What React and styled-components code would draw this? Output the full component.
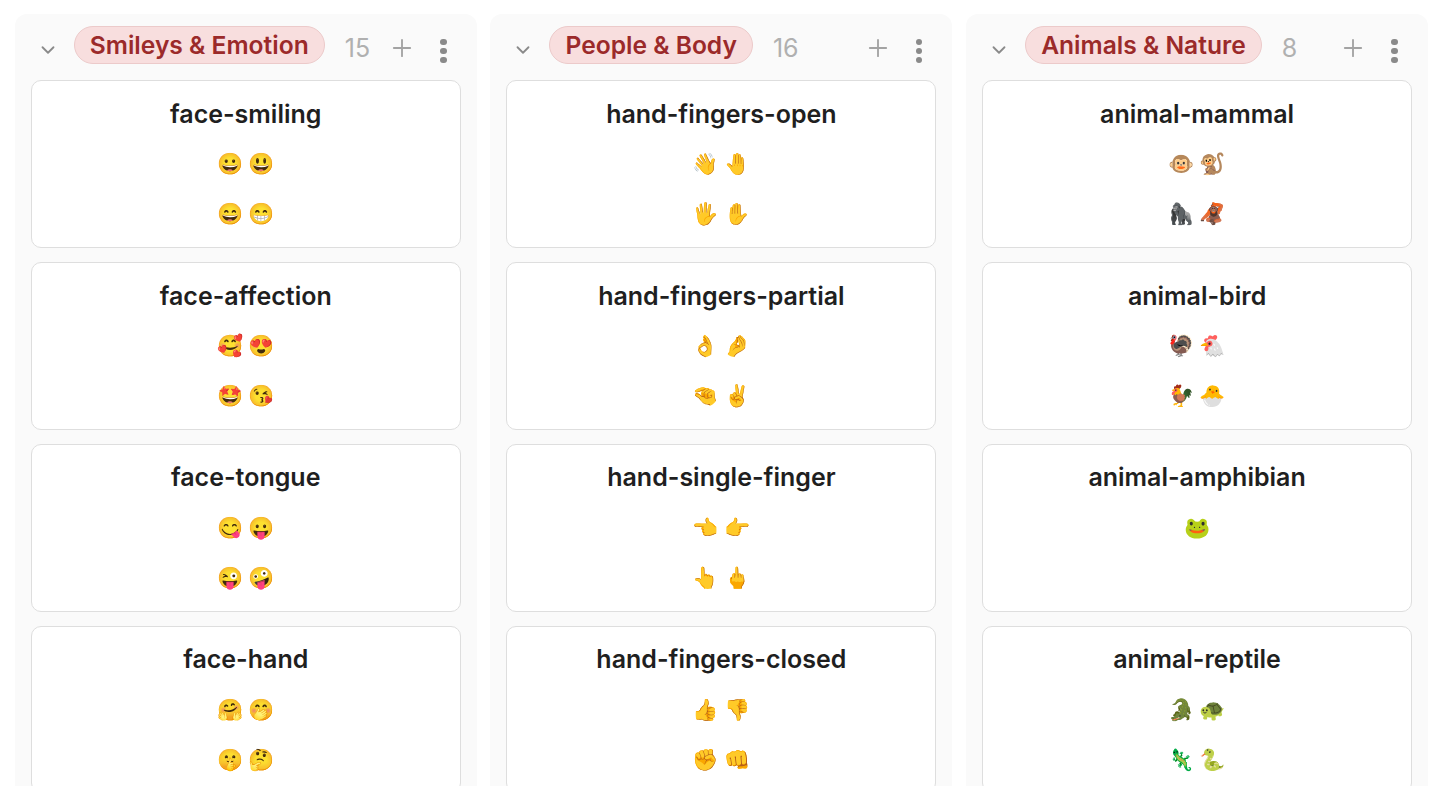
import React from "react";
import styled, { createGlobalStyle } from "styled-components";
import { ChevronDown, Plus } from "lucide-react";

const GlobalStyle = createGlobalStyle`
  html, body {
    margin: 0;
    height: 100%;
    overflow: hidden;
    background: #fff;
    font-family: Inter, "Liberation Sans", sans-serif;
  }
`;

const Board = styled.div`
  display: grid;
  grid-template-columns: repeat(3, 1fr);
  gap: 13.8px;
  height: 786px;
  overflow: hidden;
  box-sizing: border-box;
  padding: 14px 6px 0 14.8px;
`;

const Column = styled.section`
  background: #fafafa;
  border-radius: 12px 12px 0 0;
  padding: 12px 16px 0;
  min-width: 0;
`;

const Header = styled.header`
  display: flex;
  align-items: center;
  height: 38px;
  margin-bottom: 16.3px;
  color: #a3a3a3;
`;

const Toggle = styled.span`
  display: flex;
  width: 26px;
  margin: 9px 13px 0 4px;
  justify-content: center;
  color: #8a8a8a;
`;

const Tag = styled.span`
  background: #f8dede;
  border: 1px solid #eccaca;
  border-radius: 19px;
  color: #9b2a2a;
  font-size: 24.6px;
  font-weight: 600;
  line-height: 36px;
  padding: 0 15px;
  white-space: nowrap;
`;

const Count = styled.span`
  font-size: 25px;
  margin: 6px 0 0 20px;
  line-height: 30px;
  color: #b0b0b0;
`;

const Actions = styled.div`
  display: flex;
  align-items: center;
  margin: 6px 0 0 auto;
  gap: 24px;
`;

const Dots = styled.span`
  display: flex;
  flex-direction: column;
  gap: 2.5px;
  margin: 6px 14px 0 0;

  i {
    width: 6.5px;
    height: 6.5px;
    border-radius: 50%;
    background: #8a8a8a;
  }
`;

const Card = styled.article`
  box-sizing: border-box;
  height: 167.8px;
  margin-bottom: 14px;
  background: #fff;
  border: 1px solid #dedede;
  border-radius: 10px;
  text-align: center;
`;

const Title = styled.h3`
  margin: 15.6px 0 18.4px;
  color: #1f1f1f;
  font-size: 25px;
  font-weight: 600;
  line-height: 34px;
`;

const EmojiRow = styled.div`
  display: flex;
  justify-content: center;
  gap: 5px;
  height: 50px;
  font-family: "Noto Color Emoji", "Apple Color Emoji", sans-serif;
  font-size: 21px;
  line-height: 30px;
`;

const columns = [
  {
    name: "Smileys & Emotion",
    count: 15,
    cards: [
      ["face-smiling", ["😀", "😃"], ["😄", "😁"]],
      ["face-affection", ["🥰", "😍"], ["🤩", "😘"]],
      ["face-tongue", ["😋", "😛"], ["😜", "🤪"]],
      ["face-hand", ["🤗", "🤭"], ["🤫", "🤔"]],
    ],
  },
  {
    name: "People & Body",
    count: 16,
    cards: [
      ["hand-fingers-open", ["👋", "🤚"], ["🖐", "✋"]],
      ["hand-fingers-partial", ["👌", "🤌"], ["🤏", "✌"]],
      ["hand-single-finger", ["👈", "👉"], ["👆", "🖕"]],
      ["hand-fingers-closed", ["👍", "👎"], ["✊", "👊"]],
    ],
  },
  {
    name: "Animals & Nature",
    count: 8,
    cards: [
      ["animal-mammal", ["🐵", "🐒"], ["🦍", "🦧"]],
      ["animal-bird", ["🦃", "🐔"], ["🐓", "🐣"]],
      ["animal-amphibian", ["🐸"], []],
      ["animal-reptile", ["🐊", "🐢"], ["🦎", "🐍"]],
    ],
  },
];

export default function App() {
  return (
    <>
      <GlobalStyle />
      <Board>
        {columns.map((col) => (
          <Column key={col.name}>
            <Header>
              <Toggle>
                <ChevronDown size={22} strokeWidth={2} />
              </Toggle>
              <Tag>{col.name}</Tag>
              <Count>{col.count}</Count>
              <Actions>
                <Plus size={28} strokeWidth={1.6} />
                <Dots>
                  <i />
                  <i />
                  <i />
                </Dots>
              </Actions>
            </Header>
            {col.cards.map(([title, first, second]) => (
              <Card key={title}>
                <Title>{title}</Title>
                <EmojiRow>
                  {first.map((e) => (
                    <span key={e}>{e}</span>
                  ))}
                </EmojiRow>
                <EmojiRow>
                  {second.map((e) => (
                    <span key={e}>{e}</span>
                  ))}
                </EmojiRow>
              </Card>
            ))}
          </Column>
        ))}
      </Board>
    </>
  );
}
